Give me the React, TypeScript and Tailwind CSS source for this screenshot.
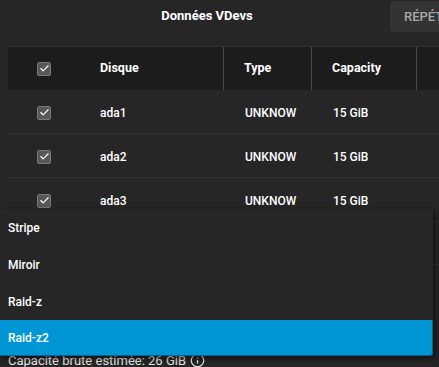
import { Check, Info } from "lucide-react";

const disks = [
  { name: "ada1", type: "UNKNOW", capacity: "15 GiB" },
  { name: "ada2", type: "UNKNOW", capacity: "15 GiB" },
  { name: "ada3", type: "UNKNOW", capacity: "15 GiB" },
];

const layouts = ["Stripe", "Miroir", "Raid-z", "Raid-z2"];

function Box() {
  return (
    <span className="flex h-[14px] w-[14px] items-center justify-center rounded-[2px] border border-[#7a7a7a] bg-[#575757]">
      <Check size={11} strokeWidth={2.5} className="text-white" />
    </span>
  );
}

export default function App() {
  return (
    <div
      className="relative h-[367px] w-[439px] overflow-hidden bg-[#262626] text-white"
      style={{ fontFamily: "Roboto, 'Noto Sans', sans-serif" }}
    >
      {/* top bar */}
      <div className="flex h-[46px] w-[480px] items-start">
        <div className="flex h-[32px] w-[390px] shrink-0 items-center justify-center pl-[24px] text-[13px] font-bold">
          Données VDevs
        </div>
        <button className="mt-[1px] flex h-[31px] w-[80px] shrink-0 items-center rounded-[4px] bg-[#333333] pl-[14px] text-[13px] font-medium text-[#a9a9a9]">
          RÉPÉTER
        </button>
      </div>

      {/* table */}
      <div className="ml-[8px] w-[460px] border-t border-[#333333]">
        <div className="flex h-[43px] bg-[#1c1c1c] text-[12.5px] font-bold">
          <div className="flex w-[216px] items-center border-r border-[#4a4a4a]">
            <span className="ml-[29px]">
              <Box />
            </span>
            <span className="ml-[49px]">Disque</span>
          </div>
          <div className="flex w-[88px] items-center border-r border-[#4a4a4a] pl-[20px]">Type</div>
          <div className="flex w-[105px] items-center border-r border-[#4a4a4a] pl-[20px]">Capacity</div>
          <div className="flex-1" />
        </div>
        {disks.map((d) => (
          <div key={d.name} className="flex h-[44px] border-b border-[#333333] pt-[2px] text-[12px] font-medium">
            <div className="flex w-[216px] items-center">
              <span className="ml-[29px]">
                <Box />
              </span>
              <span className="ml-[49px]">{d.name}</span>
            </div>
            <div className="flex w-[88px] items-center pl-[21px]">{d.type}</div>
            <div className="flex w-[105px] items-center pl-[21px]">{d.capacity}</div>
          </div>
        ))}
        <div className="h-[43px] border-b border-[#333333]" />
      </div>

      <div className="ml-[8px] mt-[86px] flex items-center gap-[4px] text-[13px] text-[#e8e8e8]">
        Capacité brute estimée: 26 GiB
        <Info size={15} strokeWidth={2} />
      </div>

      {/* dropdown menu */}
      <div className="absolute left-0 top-[209px] w-[433px] bg-[#262626] shadow-[2px_2px_6px_rgba(0,0,0,0.6)]">
        {layouts.map((l) => (
          <div
            key={l}
            className={
              l === "Raid-z2"
                ? "flex h-[36px] items-center rounded-br-[3px] border-b border-r border-[#0b5f88] bg-[#0096d6] pl-[8px] text-[12px] font-medium"
                : "flex h-[37px] items-center pl-[8px] text-[12px] font-medium"
            }
          >
            {l}
          </div>
        ))}
      </div>
    </div>
  );
}
